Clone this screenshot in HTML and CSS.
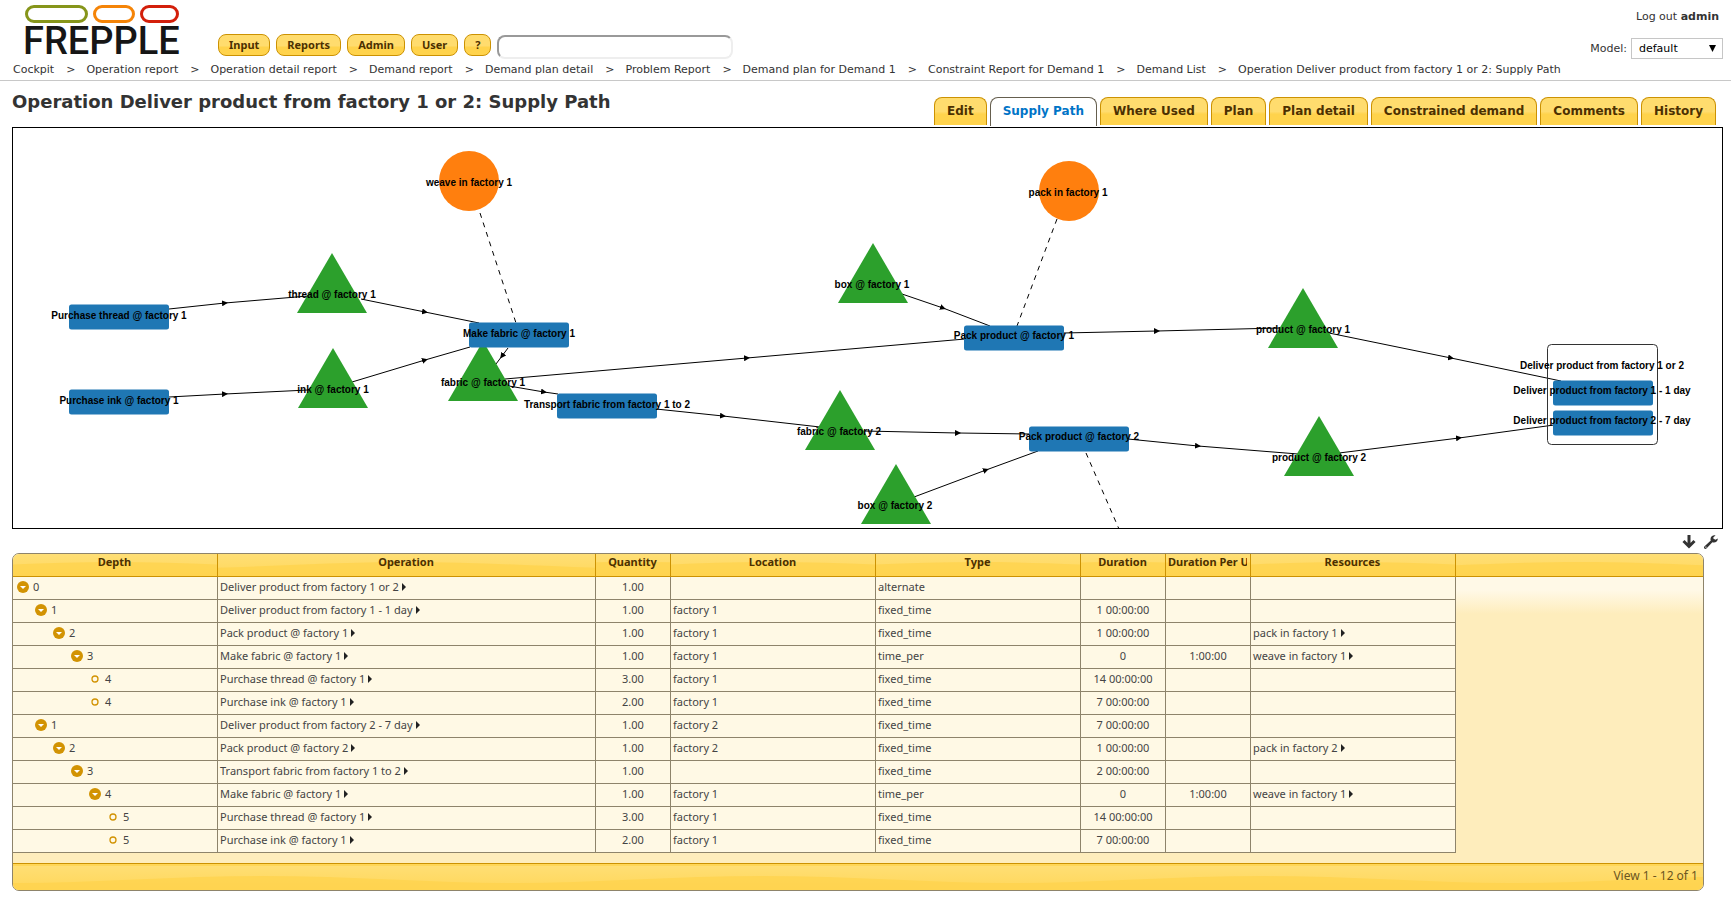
FILE: index.html
```html
<!DOCTYPE html>
<html lang="en">
<head>
<meta charset="utf-8">
<title>Operation Deliver product from factory 1 or 2: Supply Path</title>
<link rel="stylesheet" href="styles.css">
</head>
<body>
<header class="header">
  <div class="topbar">
    <a class="logo" href="#">
      <svg class="logo-pills" width="156" height="18" viewBox="0 0 156 18" aria-hidden="true">
        <g fill="none" stroke-width="3">
          <rect x="1.500" y="1.500" width="60" height="15" rx="7.500" stroke="#86951a"/>
          <rect x="69.500" y="1.500" width="39" height="15" rx="7.500" stroke="#f58407"/>
          <rect x="116.500" y="1.500" width="36" height="15" rx="7.500" stroke="#d31f0a"/>
        </g>
      </svg>
      <span class="logo-name">FREPPLE</span>
    </a>
    <div class="menu">
      <button class="menu-button" type="button">Input</button>
      <button class="menu-button" type="button">Reports</button>
      <button class="menu-button" type="button">Admin</button>
      <button class="menu-button" type="button">User</button>
      <button class="menu-button" type="button">?</button>
      <input class="search" type="text" aria-label="Search">
    </div>
    <div class="account">
      <a class="logout" href="#">Log out <strong>admin</strong></a>
      <div class="model">
        <label for="model">Model:</label>
        <select id="model" class="model-select"><option>default</option></select>
      </div>
    </div>
  </div>
  <nav class="crumbs" aria-label="Breadcrumb">
    <a href="#">Cockpit</a><span>&gt;</span>
    <a href="#">Operation report</a><span>&gt;</span>
    <a href="#">Operation detail report</a><span>&gt;</span>
    <a href="#">Demand report</a><span>&gt;</span>
    <a href="#">Demand plan detail</a><span>&gt;</span>
    <a href="#">Problem Report</a><span>&gt;</span>
    <a href="#">Demand plan for Demand 1</a><span>&gt;</span>
    <a href="#">Constraint Report for Demand 1</a><span>&gt;</span>
    <a href="#">Demand List</a><span>&gt;</span>
    <a href="#">Operation Deliver product from factory 1 or 2: Supply Path</a>
  </nav>
</header>

<main class="main">
  <div class="title-row">
    <h1 class="title">Operation Deliver product from factory 1 or 2: Supply Path</h1>
    <nav class="tabs" aria-label="Views">
      <a class="tab" href="#">Edit</a>
      <a class="tab tab-active" href="#" aria-current="page">Supply Path</a>
      <a class="tab" href="#">Where Used</a>
      <a class="tab" href="#">Plan</a>
      <a class="tab" href="#">Plan detail</a>
      <a class="tab" href="#">Constrained demand</a>
      <a class="tab" href="#">Comments</a>
      <a class="tab" href="#">History</a>
    </nav>
  </div>

  <svg class="network" role="img" aria-label="Supply path network">
    <defs>
      <marker id="arrow" viewBox="0 0 6 6" refX="3" refY="3" markerWidth="6" markerHeight="6" orient="auto"><path d="M0 0 6 3 0 6z"/></marker>
      <rect id="operation" x="-50" y="-12.500" width="100" height="25" rx="2.500" fill="#1f77b4"/>
      <path id="buffer" d="M0 -43 35 17H-35z" fill="#2ca02c"/>
      <circle id="resource" r="30" fill="#ff7f0e"/>
    </defs>
    <g transform="translate(-13 -128)">
      <g class="edges">
        <path d="M169 309 225 303 308 296"/>
        <path d="M169 397 225 394 308 390"/>
        <path d="M361 299 425 312 479 323"/>
        <path d="M352 382 425 360 470 347"/>
        <path d="M508 348 502 356 496 364"/>
        <path d="M505 379 747 358 965 339"/>
        <path d="M509 386 544 392 558 394"/>
        <path d="M656 409 723 416 820 427"/>
        <path d="M864 431 958 433 1030 434"/>
        <path d="M902 294 943 308 990 326"/>
        <path d="M914 497 986 470 1038 451"/>
        <path d="M1063 333 1157 331 1280 328"/>
        <path d="M1128 439 1198 446 1298 454"/>
        <path d="M1329 333 1451 358 1561 381"/>
        <path d="M1339 453 1459 438 1554 425"/>
      </g>
      <g class="links">
        <path d="M480 213 516 323"/>
        <path d="M1057 219 1017 326"/>
        <path d="M1086 453 1119 529"/>
      </g>
      <rect class="group" x="1547.500" y="344.500" width="110" height="100" rx="4"/>
      <use href="#resource" x="469" y="181"/>
      <use href="#resource" x="1069" y="191"/>
      <use href="#buffer" x="332" y="296"/>
      <use href="#buffer" x="333" y="391"/>
      <use href="#buffer" x="483" y="384"/>
      <use href="#buffer" x="873" y="286"/>
      <use href="#buffer" x="840" y="433"/>
      <use href="#buffer" x="896" y="507"/>
      <use href="#buffer" x="1303" y="331"/>
      <use href="#buffer" x="1319" y="459"/>
      <use href="#operation" x="119" y="317"/>
      <use href="#operation" x="119" y="402"/>
      <use href="#operation" x="519" y="335"/>
      <use href="#operation" x="607" y="406"/>
      <use href="#operation" x="1014" y="338"/>
      <use href="#operation" x="1079" y="439"/>
      <use href="#operation" x="1603" y="393"/>
      <use href="#operation" x="1603" y="423"/>
      <g class="labels">
        <text x="469" y="186">weave in factory 1</text>
        <text x="1068" y="196">pack in factory 1</text>
        <text x="332" y="298">thread @ factory 1</text>
        <text x="333" y="393">ink @ factory 1</text>
        <text x="483" y="386">fabric @ factory 1</text>
        <text x="872" y="288">box @ factory 1</text>
        <text x="839" y="435">fabric @ factory 2</text>
        <text x="895" y="509">box @ factory 2</text>
        <text x="1303" y="333">product @ factory 1</text>
        <text x="1319" y="461">product @ factory 2</text>
        <text x="119" y="319">Purchase thread @ factory 1</text>
        <text x="119" y="404">Purchase ink @ factory 1</text>
        <text x="519" y="337">Make fabric @ factory 1</text>
        <text x="607" y="408">Transport fabric from factory 1 to 2</text>
        <text x="1014" y="339">Pack product @ factory 1</text>
        <text x="1079" y="440">Pack product @ factory 2</text>
        <text x="1602" y="369">Deliver product from factory 1 or 2</text>
        <text x="1602" y="394">Deliver product from factory 1 - 1 day</text>
        <text x="1602" y="424">Deliver product from factory 2 - 7 day</text>
      </g>
    </g>
  </svg>

  <div class="tools">
    <button class="tool" type="button" aria-label="Export"><svg width="14" height="14" viewBox="0 0 14 14"><path d="M7 0v11M1.500 6 7 11.500 12.500 6" fill="none" stroke="#333" stroke-width="3"/></svg></button>
    <button class="tool" type="button" aria-label="Customize"><svg width="14" height="14" viewBox="0 0 14 14"><path d="M13.800 3.400 11.400 4.800 9.300 3.600V2.400L11.600.300C9 -.300 6.400 1.400 6.500 4.200c0 .500.100.900.300 1.300L.600 11.200c-.800.800-.800 1.700-.200 2.300s1.600.600 2.300-.200L8.400 7.200c2.800 1 5.700-.900 5.400-3.800z" fill="#333"/><circle cx="1.900" cy="12.100" r=".7" fill="#fff"/></svg></button>
  </div>

  <section class="grid">
    <table class="table">
      <colgroup><col class="c-wide"><col class="c-operation"><col class="c-quantity"><col class="c-wide"><col class="c-wide"><col class="c-duration"><col class="c-duration"><col class="c-wide"><col></colgroup>
      <thead><tr><th>Depth</th><th>Operation</th><th>Quantity</th><th>Location</th><th>Type</th><th>Duration</th><th><div class="clip">Duration Per Unit</div></th><th>Resources</th><th class="rest"></th></tr></thead>
      <tbody id="rows"></tbody>
    </table>
    <div class="pager">View 1 - 12 of 1</div>
  </section>
</main>
<script src="grid.js"></script>
</body>
</html>
```
FILE: grid.js
```js
const rows = [
  [0, "Deliver product from factory 1 or 2", "1.00", "", "alternate", "", "", ""],
  [1, "Deliver product from factory 1 - 1 day", "1.00", "factory 1", "fixed_time", "1 00:00:00", "", ""],
  [2, "Pack product @ factory 1", "1.00", "factory 1", "fixed_time", "1 00:00:00", "", "pack in factory 1"],
  [3, "Make fabric @ factory 1", "1.00", "factory 1", "time_per", "0", "1:00:00", "weave in factory 1"],
  [4, "Purchase thread @ factory 1", "3.00", "factory 1", "fixed_time", "14 00:00:00", "", ""],
  [4, "Purchase ink @ factory 1", "2.00", "factory 1", "fixed_time", "7 00:00:00", "", ""],
  [1, "Deliver product from factory 2 - 7 day", "1.00", "factory 2", "fixed_time", "7 00:00:00", "", ""],
  [2, "Pack product @ factory 2", "1.00", "factory 2", "fixed_time", "1 00:00:00", "", "pack in factory 2"],
  [3, "Transport fabric from factory 1 to 2", "1.00", "", "fixed_time", "2 00:00:00", "", ""],
  [4, "Make fabric @ factory 1", "1.00", "factory 1", "time_per", "0", "1:00:00", "weave in factory 1"],
  [5, "Purchase thread @ factory 1", "3.00", "factory 1", "fixed_time", "14 00:00:00", "", ""],
  [5, "Purchase ink @ factory 1", "2.00", "factory 1", "fixed_time", "7 00:00:00", "", ""]
];

const toggle = '<button class="toggle" type="button" aria-label="Collapse"><svg width="12" height="12" viewBox="0 0 12 12"><circle cx="6" cy="6" r="6" fill="#d29303"/><path d="M3 5h6L6 8z" fill="#fff"/></svg></button>';
const leaf = '<svg class="toggle" width="12" height="12" viewBox="0 0 12 12"><circle cx="6" cy="6" r="3" fill="none" stroke="#d29303" stroke-width="1.300"/></svg>';
const link = name => name ? `<div class="link">${name}<button class="more" type="button" aria-label="Open menu"></button></div>` : "";

document.getElementById("rows").innerHTML = rows.map((r, i) => {
  const parent = rows[i + 1] && rows[i + 1][0] > r[0];
  return `<tr><td><div class="node" style="padding-left:${r[0] * 18 + 2}px">${parent ? toggle : leaf}${r[0]}</div></td>` +
    `<td>${link(r[1])}</td><td class="num">${r[2]}</td><td>${r[3]}</td><td>${r[4]}</td>` +
    `<td class="num">${r[5]}</td><td class="num">${r[6]}</td><td>${link(r[7])}</td><td class="rest"></td></tr>`;
}).join("");
```
FILE: styles.css
```css
:root {
  --ui: "DejaVu Sans", sans-serif;
  --compact: "Noto Sans", "Open Sans", sans-serif;
  --gold-line: #cc9202;
  --grid-line: #8e846b;
  --wave: url("data:image/svg+xml,%3Csvg xmlns='http://www.w3.org/2000/svg' width='500' height='24'%3E%3Cpath d='M0 17C80 17 160 10 250 10S420 17 500 17V24H0z' fill='%23ffd34c' fill-opacity='.75'/%3E%3C/svg%3E");
}

* { box-sizing: border-box; }

body {
  margin: 0;
  background: #fff;
  color: #333;
  font: 11px/14px var(--ui);
}

a { color: inherit; text-decoration: none; }
button { font: inherit; color: inherit; }

.topbar {
  display: flex;
  align-items: flex-end;
  height: 60px;
}

.logo {
  display: flex;
  flex-direction: column;
  width: 193px;
  height: 55px;
  margin-left: 25px;
  flex: none;
  align-self: flex-start;
  padding-top: 5px;
}
.logo-pills { flex: none; }
.logo-name {
  margin-left: -2px;
  color: #161616;
  font: 500 38px/36px Roboto, sans-serif;
}

.menu {
  display: flex;
  align-items: flex-start;
  gap: 6px;
  flex: 1;
  padding-bottom: 1px;
}
.menu-button {
  height: 22px;
  padding: 0 10px;
  border: 1px solid var(--gold-line);
  border-radius: 8px;
  background: linear-gradient(#ffdc6e 0 55%, #ffd34c 60%);
  color: #4c3000;
  font: bold 11px/18px var(--compact);
}
.search {
  width: 236px;
  height: 24px;
  margin: 1px 0 0;
  border: 2px solid;
  border-color: #999 #eee #eee #999;
  border-radius: 8px;
  padding: 0 6px;
  font: 12px var(--ui);
}

.account {
  display: flex;
  flex-direction: column;
  align-items: flex-end;
  gap: 14px;
  padding: 0 8px 1px 0;
}
.logout { padding-right: 4px; }
.model { display: flex; align-items: center; gap: 4px; }
.model-select {
  width: 92px;
  height: 21px;
  appearance: none;
  border: 1px solid #c6c6c6;
  border-radius: 0;
  padding: 0 7px;
  background: #fff url("data:image/svg+xml,%3Csvg xmlns='http://www.w3.org/2000/svg' width='7' height='7'%3E%3Cpath d='M0 0h7L3.500 7z'/%3E%3C/svg%3E") no-repeat right 6px center;
  color: #000;
  font: 11px var(--ui);
}

.crumbs {
  display: flex;
  align-items: center;
  height: 21px;
  padding: 0 13px;
  border-bottom: 1px solid #c8c8c8;
  white-space: nowrap;
}
.crumbs span { margin: 0 11px 0 12px; }

.main { padding: 0 8px 0 12px; }

.title-row {
  display: flex;
  align-items: flex-end;
  justify-content: space-between;
  height: 46px;
  padding: 0 7px 1px 0;
}
.title {
  align-self: flex-start;
  margin: 9px 0 0;
  font: bold 18px/24px var(--ui);
  white-space: nowrap;
}

.tabs { display: flex; gap: 3px; }
.tab {
  height: 28px;
  padding: 0 12px;
  border: 1px solid var(--gold-line);
  border-bottom: 0;
  border-radius: 8px 8px 0 0;
  background: linear-gradient(#ffdc6e 0 50%, #ffd34c 60%);
  color: #4c3000;
  font: bold 12px/26px var(--ui);
  white-space: nowrap;
}
.tab-active {
  height: 29px;
  border-color: #655e4e;
  background: #fff;
  color: #0074c7;
}

.network {
  display: block;
  width: 100%;
  height: 402px;
  border: 1px solid #000;
  background: #fff;
}
.edges { fill: none; stroke: #000; marker-mid: url(#arrow); }
.links { fill: none; stroke: #000; stroke-dasharray: 5 5; }
.group { fill: none; stroke: #333; }
.labels {
  fill: #000;
  font: bold 10px "Liberation Sans", sans-serif;
  text-anchor: middle;
}

.tools {
  display: flex;
  justify-content: flex-end;
  align-items: center;
  gap: 8px;
  height: 24px;
  padding: 2px 5px 0 0;
}
.tool {
  display: flex;
  padding: 0;
  border: 0;
  background: none;
}

.grid {
  margin-right: 19px;
  border: 1px solid var(--grid-line);
  border-radius: 7px;
  overflow: hidden;
  background: linear-gradient(#fff9e7 36px, #feedbc 60px);
  font-family: var(--compact);
}
.table {
  width: 100%;
  table-layout: fixed;
  border-collapse: separate;
  border-spacing: 0;
}
.c-wide { width: 205px; }
.c-operation { width: 378px; }
.c-quantity { width: 75px; }
.c-duration { width: 85px; }

.table th {
  height: 23px;
  padding: 0 3px 0 2px;
  border-right: 1px solid var(--gold-line);
  border-bottom: 1px solid var(--gold-line);
  background: var(--wave) 50% 100%, linear-gradient(#ffdf76, #ffd75a);
  color: #4c3000;
  font: bold 11px/15px var(--compact);
  vertical-align: top;
  white-space: nowrap;
}
.clip { overflow: hidden; text-align: left; }
.table th.rest { border-right: 0; }
.table td {
  height: 23px;
  padding: 0 2px 3px;
  border-right: 1px solid var(--grid-line);
  border-bottom: 1px solid var(--grid-line);
  background: #fff9e5;
  color: #444;
  font: 11px/19px var(--compact);
  white-space: nowrap;
}
.table td.num { text-align: center; }
.table td.rest { border: 0; background: none; }

.node { display: flex; align-items: center; gap: 4px; }
.link { display: flex; align-items: center; gap: 3px; }
.toggle {
  display: block;
  width: 12px;
  height: 12px;
  padding: 0;
  border: 0;
  background: none;
}
.toggle svg { display: block; }
.more {
  width: 0;
  height: 0;
  padding: 0;
  border: 4px solid transparent;
  border-left-color: #222;
  border-right: 0;
  background: none;
}

.pager {
  height: 27px;
  margin-top: 10px;
  padding-right: 5px;
  border-top: 1px solid var(--gold-line);
  background: var(--wave) 0 100%, linear-gradient(#ffdf76, #ffd75a);
  color: #6b5520;
  font-size: 12px;
  line-height: 23px;
  text-align: right;
}
```
